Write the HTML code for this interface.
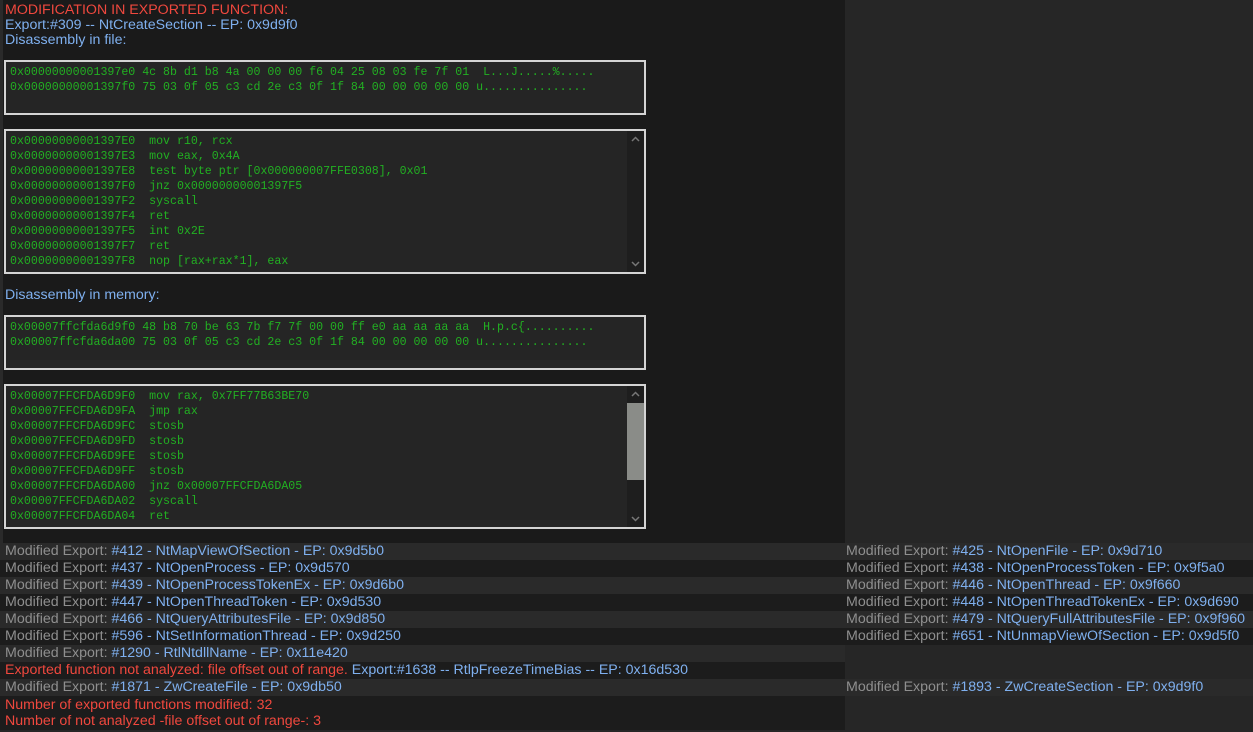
<!DOCTYPE html>
<html><head><meta charset="utf-8"><style>
*{margin:0;padding:0;box-sizing:border-box}
body{width:1253px;height:732px;background:#262626;position:relative;overflow:hidden;font-family:"Liberation Sans",sans-serif;font-size:14.2px}
#left{position:absolute;left:0;top:0;width:845px;height:543px;background:#1a1a1a;border-left:3px solid #2a2a2a}
.t{position:absolute;left:5px;line-height:16px;white-space:nowrap}
.red{color:#f0483e}.blue{color:#7fb0ef}.gray{color:#8f8f8f}
.box{position:absolute;left:4px;width:642px;background:#252525;border:2px solid #d4d4d4;font-family:"Liberation Mono",monospace;font-size:11.6px;color:#22b022;line-height:15px;padding:3px 0 0 4px;white-space:pre;overflow:hidden}
.sb{position:absolute;right:0;top:0;bottom:0;width:17px;background:#1e1e1e}
.sb svg{position:absolute;left:4px}
.row{position:absolute;height:17px;line-height:17px;padding-left:5px;white-space:nowrap}
.a{background:#2a2a2a}.b{background:#1c1c1c}
</style></head><body>
<div id="left"></div>
<div class="t red" style="top:2px">MODIFICATION IN EXPORTED FUNCTION:</div>
<div class="t blue" style="top:17px">Export:#309 -- NtCreateSection -- EP: 0x9d9f0</div>
<div class="t blue" style="top:32px">Disassembly in file:</div>
<div class="box" style="top:60px;height:55px">0x00000000001397e0 4c 8b d1 b8 4a 00 00 00 f6 04 25 08 03 fe 7f 01  L...J.....%.....
0x00000000001397f0 75 03 0f 05 c3 cd 2e c3 0f 1f 84 00 00 00 00 00 u...............</div>
<div class="box" style="top:129px;height:145px">0x00000000001397E0  mov r10, rcx
0x00000000001397E3  mov eax, 0x4A
0x00000000001397E8  test byte ptr [0x000000007FFE0308], 0x01
0x00000000001397F0  jnz 0x00000000001397F5
0x00000000001397F2  syscall
0x00000000001397F4  ret
0x00000000001397F5  int 0x2E
0x00000000001397F7  ret
0x00000000001397F8  nop [rax+rax*1], eax<div class="sb"><svg style="top:5px" width="9" height="6"><path d="M1 5L4.5 1.5L8 5" stroke="#777" stroke-width="1.5" fill="none"/></svg><svg style="bottom:5px" width="9" height="6"><path d="M1 1L4.5 4.5L8 1" stroke="#777" stroke-width="1.5" fill="none"/></svg></div></div>
<div class="t blue" style="top:287px">Disassembly in memory:</div>
<div class="box" style="top:315px;height:55px">0x00007ffcfda6d9f0 48 b8 70 be 63 7b f7 7f 00 00 ff e0 aa aa aa aa  H.p.c{..........
0x00007ffcfda6da00 75 03 0f 05 c3 cd 2e c3 0f 1f 84 00 00 00 00 00 u...............</div>
<div class="box" style="top:384px;height:145px">0x00007FFCFDA6D9F0  mov rax, 0x7FF77B63BE70
0x00007FFCFDA6D9FA  jmp rax
0x00007FFCFDA6D9FC  stosb
0x00007FFCFDA6D9FD  stosb
0x00007FFCFDA6D9FE  stosb
0x00007FFCFDA6D9FF  stosb
0x00007FFCFDA6DA00  jnz 0x00007FFCFDA6DA05
0x00007FFCFDA6DA02  syscall
0x00007FFCFDA6DA04  ret<div class="sb"><svg style="top:5px" width="9" height="6"><path d="M1 5L4.5 1.5L8 5" stroke="#777" stroke-width="1.5" fill="none"/></svg><div style="position:absolute;top:17px;height:77px;width:17px;background:#8a8c88"></div><svg style="bottom:5px" width="9" height="6"><path d="M1 1L4.5 4.5L8 1" stroke="#777" stroke-width="1.5" fill="none"/></svg></div></div>

<div class="row a" style="top:543px;left:0;width:845px"><span class="gray">Modified Export: </span><span class="blue">#412 - NtMapViewOfSection - EP: 0x9d5b0</span></div>
<div class="row b" style="top:560px;left:0;width:845px"><span class="gray">Modified Export: </span><span class="blue">#437 - NtOpenProcess - EP: 0x9d570</span></div>
<div class="row a" style="top:577px;left:0;width:845px"><span class="gray">Modified Export: </span><span class="blue">#439 - NtOpenProcessTokenEx - EP: 0x9d6b0</span></div>
<div class="row b" style="top:594px;left:0;width:845px"><span class="gray">Modified Export: </span><span class="blue">#447 - NtOpenThreadToken - EP: 0x9d530</span></div>
<div class="row a" style="top:611px;left:0;width:845px"><span class="gray">Modified Export: </span><span class="blue">#466 - NtQueryAttributesFile - EP: 0x9d850</span></div>
<div class="row b" style="top:628px;left:0;width:845px"><span class="gray">Modified Export: </span><span class="blue">#596 - NtSetInformationThread - EP: 0x9d250</span></div>
<div class="row a" style="top:645px;left:0;width:845px"><span class="gray">Modified Export: </span><span class="blue">#1290 - RtlNtdllName - EP: 0x11e420</span></div>
<div class="row b" style="top:662px;left:0;width:845px"><span class="red">Exported function not analyzed: file offset out of range. </span><span class="blue">Export:#1638 -- RtlpFreezeTimeBias -- EP: 0x16d530</span></div>
<div class="row a" style="top:679px;left:0;width:845px"><span class="gray">Modified Export: </span><span class="blue">#1871 - ZwCreateFile - EP: 0x9db50</span></div>
<div class="row b" style="top:696px;left:0;width:845px;height:34px;line-height:16px;padding-top:1px"><span class="red">Number of exported functions modified: 32<br>Number of not analyzed -file offset out of range-: 3</span></div>

<div class="row a" style="top:543px;left:845px;width:408px;padding-left:1px"><span class="gray">Modified Export: </span><span class="blue">#425 - NtOpenFile - EP: 0x9d710</span></div>
<div class="row b" style="top:560px;left:845px;width:408px;padding-left:1px"><span class="gray">Modified Export: </span><span class="blue">#438 - NtOpenProcessToken - EP: 0x9f5a0</span></div>
<div class="row a" style="top:577px;left:845px;width:408px;padding-left:1px"><span class="gray">Modified Export: </span><span class="blue">#446 - NtOpenThread - EP: 0x9f660</span></div>
<div class="row b" style="top:594px;left:845px;width:408px;padding-left:1px"><span class="gray">Modified Export: </span><span class="blue">#448 - NtOpenThreadTokenEx - EP: 0x9d690</span></div>
<div class="row a" style="top:611px;left:845px;width:408px;padding-left:1px"><span class="gray">Modified Export: </span><span class="blue">#479 - NtQueryFullAttributesFile - EP: 0x9f960</span></div>
<div class="row b" style="top:628px;left:845px;width:408px;padding-left:1px"><span class="gray">Modified Export: </span><span class="blue">#651 - NtUnmapViewOfSection - EP: 0x9d5f0</span></div>
<div class="row a" style="top:679px;left:845px;width:408px;padding-left:1px"><span class="gray">Modified Export: </span><span class="blue">#1893 - ZwCreateSection - EP: 0x9d9f0</span></div>
</body></html>
